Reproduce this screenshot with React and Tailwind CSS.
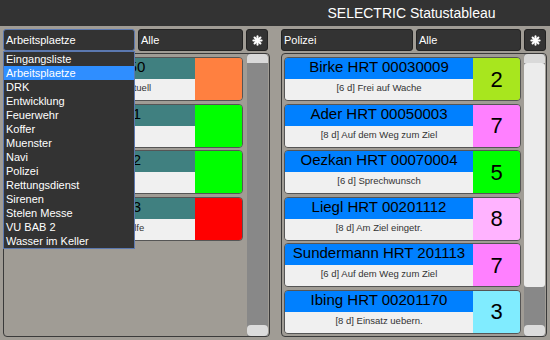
import React from "react";

const leftCards = [
  { name: "Platz 000050", status: "[6 d] Daten nicht aktuell", color: "bg-[#ff8040]" },
  { name: "Platz 00051", status: "", color: "bg-[#00ff00]" },
  { name: "Platz 00052", status: "", color: "bg-[#00ff00]" },
  { name: "Platz 00053", status: "[6 d] Benoetige Hilfe", color: "bg-[#ff0000]" },
];

const rightCards = [
  { name: "Birke HRT 00030009", status: "[6 d] Frei auf Wache", num: "2", color: "bg-[#a8e61e]" },
  { name: "Ader HRT 00050003", status: "[8 d] Auf dem Weg zum Ziel", num: "7", color: "bg-[#ff80ff]" },
  { name: "Oezkan HRT 00070004", status: "[6 d] Sprechwunsch", num: "5", color: "bg-[#00ff00]" },
  { name: "Liegl HRT 00201112", status: "[8 d] Am Ziel eingetr.", num: "8", color: "bg-[#ffb3ff]" },
  { name: "Sundermann HRT 201113", status: "[6 d] Auf dem Weg zum Ziel", num: "7", color: "bg-[#ff80ff]" },
  { name: "Ibing HRT 00201170", status: "[8 d] Einsatz uebern.", num: "3", color: "bg-[#80ecff]" },
];

const groups = [
  "Eingangsliste", "Arbeitsplaetze", "DRK", "Entwicklung", "Feuerwehr", "Koffer", "Muenster",
  "Navi", "Polizei", "Rettungsdienst", "Sirenen", "Stelen Messe", "VU BAB 2", "Wasser im Keller",
];

const Star = () => (
  <svg width="11" height="11" viewBox="0 0 12 12">
    <g stroke="#fff" strokeWidth="2.2" strokeLinecap="round">
      <line x1="6" y1="1.5" x2="6" y2="10.5" />
      <line x1="1.5" y1="6" x2="10.5" y2="6" />
      <line x1="2.8" y1="2.8" x2="9.2" y2="9.2" />
      <line x1="9.2" y1="2.8" x2="2.8" y2="9.2" />
    </g>
  </svg>
);

const Controls = ({ group, focused, open }) => (
  <div className="flex gap-[3px] h-[22px]">
    <div className="relative w-[132px]">
      <div className={`h-full bg-[#333] rounded-[3px] border ${focused ? "border-[#5b78b0]" : "border-[#222]"} text-white text-[11px] pl-[2px] flex items-center`}>
        {group}
      </div>
      {open && (
        <div className="absolute left-0 top-[22px] w-[132px] bg-[#333] border border-[#5b78b0] z-10">
          {groups.map((g) => (
            <div
              key={g}
              className={`h-[14px] leading-[14px] text-[11px] text-white pl-[2px] ${g === group ? "bg-[#2f8eff]" : ""}`}
            >
              {g}
            </div>
          ))}
        </div>
      )}
    </div>
    <div className="w-[105px] bg-[#333] rounded-[3px] border border-[#222] text-white text-[11px] pl-[2px] flex items-center">
      Alle
    </div>
    <div className="w-[22px] bg-[#333] rounded-[3px] border border-[#222] flex items-center justify-center">
      <Star />
    </div>
  </div>
);

const Card = ({ name, status, num, color, head }) => (
  <div className="flex h-[44px] border border-[#555] rounded-[4px] overflow-hidden">
    <div className="flex-1 flex flex-col min-w-0">
      <div className={`h-[21px] ${head} text-black text-[15px] leading-[18px] text-center whitespace-nowrap`}>{name}</div>
      <div className="flex-1 bg-[#f0f0f0] text-[#333] text-[9.5px] leading-[17px] text-center whitespace-nowrap">{status}</div>
    </div>
    <div className={`w-[47px] ${color} flex items-center justify-center text-black text-[22px]`}>
      {num}
    </div>
  </div>
);

const Scrollbar = ({ thumb }) => (
  <div className="w-[21px] flex flex-col bg-[#888]">
    <div className="h-[9px] bg-[#d9d9d9] rounded-t-[4px]" />
    {thumb && <div className="h-[224px] bg-[#ececec] rounded-[3px]" />}
    <div className="flex-1" />
    <div className="h-[11px] bg-[#dcdcdc] rounded-[4px]" />
  </div>
);

export default function App() {
  return (
    <div className="w-[550px] h-[340px] bg-[#a09c95] overflow-hidden font-['Liberation_Sans',Arial,sans-serif]">
      <div className="h-[26px] bg-[#333] grid grid-cols-2">
        <div />
        <div className="text-center text-white text-[14px] leading-[26px] pr-[2px]">SELECTRIC Statustableau</div>
      </div>
      <div className="flex gap-[11px] px-[3px] pt-[3px]">
        <div className="w-[267px]">
          <Controls group="Arbeitsplaetze" focused open />
          <div className="mt-[2px] h-[284px] border border-[#3a3a3a] rounded-[4px] flex pl-[3px] pr-[1px] gap-[4px]">
            <div className="flex-1 flex flex-col gap-[2.6px] pt-[3px]">
              {leftCards.map((c) => (
                <Card key={c.name} {...c} num="" head="bg-[#408080]" />
              ))}
            </div>
            <Scrollbar />
          </div>
        </div>
        <div className="w-[266px]">
          <Controls group="Polizei" />
          <div className="mt-[2px] h-[284px] border border-[#3a3a3a] rounded-[4px] flex pl-[2px] pr-[1px] gap-[3px]">
            <div className="flex-1 flex flex-col gap-[2.6px] pt-[3px]">
              {rightCards.map((c) => (
                <Card key={c.name} {...c} head="bg-[#0080ff]" />
              ))}
            </div>
            <Scrollbar thumb />
          </div>
        </div>
      </div>
    </div>
  );
}
